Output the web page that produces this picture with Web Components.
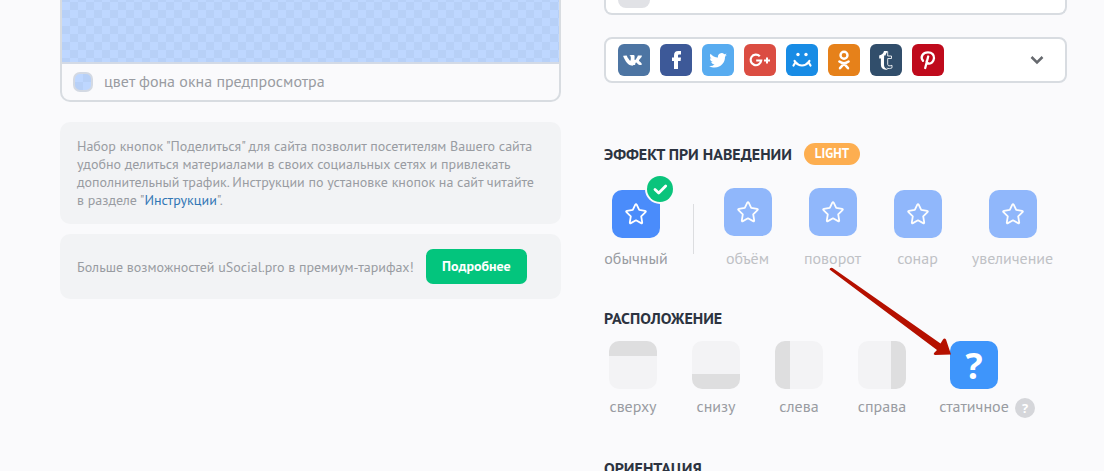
<!DOCTYPE html>
<html lang="ru">
<head>
<meta charset="utf-8">
<title>uSocial</title>
<style>
  body {
    margin: 0;
    background: #fafafc;
    color: #999ca2;
    font-family: "PT Sans", "Noto Sans", "Open Sans", sans-serif;
    font-size: 16px;
    line-height: 18px;
  }
</style>
</head>
<body>
<share-constructor></share-constructor>

<script>
const icons = {
  vk: { color: '#4d75a3', title: 'ВКонтакте', body: '<path fill="#fff" d="M15.5 21.5h1.3s.4 0 .6-.3c.2-.2.2-.6.2-.6s0-1.9.9-2.2c.8-.3 1.900 1.900 3 2.700.9.600 1.500.5 1.500.5l1.900-.1s1.500-.1.800-1.300c-.1-.1-.4-.9-2.200-2.500-1.900-1.700-1.600-1.400.6-4.400 1.400-1.800 1.900-2.900 1.800-3.300-.2-.4-1.100-.3-1.100-.3l-3.400.1s-.3 0-.5.100c-.2.100-.3.400-.3.400s-.5 1.400-1.200 2.600c-1.500 2.500-2.100 2.600-2.300 2.500-.6-.4-.4-1.500-.4-2.300 0-2.500.4-3.500-.7-3.800-.4-.1-.7-.2-1.800-.2-1.400 0-2.500 0-3.200.3-.4.200-.8.700-.6.700.3 0 .9.200 1.200.600.4.600.4 1.800.4 1.800s.2 3.300-.6 3.700c-.5.300-1.200-.3-2.700-2.900-.8-1.300-1.400-2.700-1.400-2.700s-.1-.3-.3-.4-.6-.3-.6-.3l-3.200.1s-.5 0-.7.200c-.1.200 0 .6 0 .6s2.600 6.100 5.500 9.100c2.600 2.900 5.900 2.700 5.900 2.700z" transform="translate(3.200 3.700) scale(.8)"/>' },
  facebook: { color: '#3d5998', title: 'Facebook', body: '<path fill="#fff" d="M14 25v-8h-2v-3.500h2v-2.100C14 8.500 15.500 7 18.200 7H21v3.400h-1.700c-1 0-1.300.4-1.300 1.300v1.800h3L20.600 17H18v8z"/>' },
  twitter: { color: '#58acf0', title: 'Twitter', body: '<path fill="#fff" d="M25 10.800c-.6.300-1.300.5-2 .6.700-.5 1.300-1.200 1.500-2-.7.400-1.400.7-2.200.9a3.700 3.700 0 0 0-6.300 3.300c-3-.1-5.700-1.600-7.500-3.800-1 1.700-.5 3.800 1.100 4.900-.6 0-1.100-.2-1.600-.5 0 1.800 1.200 3.300 2.900 3.700-.5.100-1.100.2-1.700.1.500 1.400 1.800 2.500 3.400 2.500A7.400 7.400 0 0 1 7.200 22c1.600 1 3.500 1.600 5.500 1.600 6.700 0 10.500-5.600 10.300-10.800.8-.5 1.400-1.200 2-2z"/>' },
  google: { color: '#db4d42', title: 'Google+', body: '<path fill="none" stroke="#fff" stroke-width="2.200" d="M15.800 12.300A5.300 5.300 0 1 0 17.200 16.500H12.200"/><path stroke="#fff" stroke-width="2" d="M20 16.500h6M23 13.500v6"/>' },
  mailru: { color: '#188ce5', title: 'Мой Мир', body: '<circle cx="12" cy="10.500" r="1.700" fill="#fff"/><circle cx="20" cy="10.500" r="1.700" fill="#fff"/><path fill="none" stroke="#fff" stroke-width="2.200" stroke-linecap="round" stroke-linejoin="round" d="M7.500 21.500l2-3.300c3.200 4.400 9.800 4.400 13 0l2 3.300M9.500 18.200L8.600 17M22.500 18.200l.9-1.200"/>' },
  ok: { color: '#e6811a', title: 'Одноклассники', body: '<circle cx="16" cy="11.200" r="3.500" fill="none" stroke="#fff" stroke-width="2.400"/><path fill="none" stroke="#fff" stroke-width="2.500" stroke-linecap="round" stroke-linejoin="round" d="M11.400 17.600c2.800 2 6.400 2 9.200 0M12 24.200l4-4.500 4 4.500"/>' },
  tumblr: { color: '#314e6b', title: 'Tumblr', body: '<path fill="#fff" d="M14 7h3.500v.9c-1.300 1-1.800 2.400-2 3.600h-1.400v2.800H14v6.700c0 2 1.300 3.700 4 4.400-4.600.9-7.100-.8-7.100-4.600v-6.200H9.200v-3C12.300 10.500 13.500 9 14 7z"/><path fill="none" stroke="#fff" stroke-opacity=".85" d="M17.700 7.500V12h3.800v2.500h-3.800v5.800c0 1.700 1.600 2 4.300 1v2.500c-1.500.9-3.800 1.100-5.300.2"/>' },
  pinterest: { color: '#bf0a1c', title: 'Pinterest', body: '<path fill="none" stroke="#fff" stroke-width="2.300" stroke-linecap="round" d="M11 16.800c-3.200-4-.1-8.400 5-8.400 4.200 0 6.300 2.600 6 5.800-.4 3.800-3 5.600-5.200 5.300-1.500-.2-2.200-1.200-2.200-2.200M16.200 12.500L13.200 24"/>' }
}

class SharePanel extends HTMLElement {

  constructor () {
    super()
    this.shadow = this.attachShadow({ mode: 'open' })
  }

  connectedCallback () {
    this.render()
  }

  render () {
    this.shadow.innerHTML =
    /*html*/`
    <style>
      :host {
        display: flex;
        align-items: center;
        box-sizing: border-box;
        padding: 15px 17px;
        border-radius: 10px;
        background: #f2f3f5;
        font-size: var(--note-size);
      }
    </style>
    <slot></slot>
    `
  }
}

customElements.define('share-panel', SharePanel);

class PreviewWindow extends HTMLElement {

  constructor () {
    super()
    this.shadow = this.attachShadow({ mode: 'open' })
  }

  connectedCallback () {
    this.render()
  }

  render () {
    this.shadow.innerHTML =
    /*html*/`
    <style>
      :host {
        display: block;
        border: 2px solid #d8dce1;
        border-top: 0;
        border-radius: 0 0 10px 10px;
      }

      .canvas {
        height: 62px;
        border-bottom: 2px solid #d3dae6;
        background: repeating-conic-gradient(#b7d0f7 0 25%, #bed7ff 0 50%) 0 2px / 16px 16px;
      }

      .background {
        display: flex;
        align-items: center;
        gap: 11px;
        height: 36px;
        padding: 0 11px;
        line-height: 16px;
      }

      #caption {
        padding-bottom: 2px;
      }

      button {
        width: 20px;
        height: 20px;
        padding: 0;
        border: 2px solid #d3d9e3;
        border-radius: 7px;
        background: repeating-conic-gradient(#b7d0f7 0 25%, #bed7ff 0 50%) 0 0 / 16px 16px;
      }
    </style>

    <div class="canvas"></div>
    <div class="background">
      <button type="button" aria-labelledby="caption"></button>
      <span id="caption"><slot></slot></span>
    </div>
    `
  }
}

customElements.define('preview-window', PreviewWindow);

class NetworkSelect extends HTMLElement {

  constructor () {
    super()
    this.shadow = this.attachShadow({ mode: 'open' })
  }

  connectedCallback () {
    this.render()
  }

  render () {
    const networks = this.getAttribute('networks').split(' ')

    this.shadow.innerHTML =
    /*html*/`
    <style>
      :host {
        display: block;
      }

      button {
        display: flex;
        align-items: center;
        gap: 10px;
        box-sizing: border-box;
        width: 100%;
        height: 46px;
        padding: 0 21px 0 12px;
        border: 2px solid #d8dce1;
        border-radius: 8px;
        background: #fff;
      }

      .chevron {
        margin-left: auto;
      }
    </style>

    <button type="button" aria-label="Социальные сети">
      ${networks.map(name => `
      <svg width="32" height="32" viewBox="0 0 32 32" role="img" aria-label="${icons[name].title}">
        <rect width="32" height="32" rx="6" fill="${icons[name].color}"/>${icons[name].body}
      </svg>`).join('')}
      <svg class="chevron" width="14" height="10" viewBox="0 0 14 10" fill="none" stroke="#66696e" stroke-width="2.500">
        <path d="M1.500 2L7 7.500 12.500 2"/>
      </svg>
    </button>
    `
  }
}

customElements.define('network-select', NetworkSelect);

class SectionTitle extends HTMLElement {

  constructor () {
    super()
    this.shadow = this.attachShadow({ mode: 'open' })
  }

  connectedCallback () {
    this.render()
  }

  render () {
    const badge = this.getAttribute('badge')

    this.shadow.innerHTML =
    /*html*/`
    <style>
      :host {
        display: flex;
        align-items: center;
        gap: 12px;
        height: 22px;
        color: #2c3340;
      }

      h2 {
        margin: 0;
        font-size: var(--title-size);
        line-height: 24px;
        white-space: nowrap;
      }

      .badge {
        padding: 0 11px;
        border-radius: 11px;
        background: #fdae50;
        color: #fff;
        font-size: 13px;
        font-weight: bold;
        line-height: 22px;
      }
    </style>

    <h2><slot></slot></h2>
    ${badge ? `<span class="badge">${badge}</span>` : ''}
    `
  }
}

customElements.define('section-title', SectionTitle);

class EffectOption extends HTMLElement {

  constructor () {
    super()
    this.shadow = this.attachShadow({ mode: 'open' })
  }

  connectedCallback () {
    this.render()
  }

  render () {
    const checked = this.hasAttribute('checked')

    this.shadow.innerHTML =
    /*html*/`
    <style>
      :host {
        display: block;
        flex: none;
        width: 85px;
        opacity: .6;
      }

      :host([checked]) {
        width: 64px;
        opacity: 1;
      }

      :host([wide]) {
        width: 105px;
      }

      button {
        display: flex;
        flex-direction: column;
        align-items: center;
        gap: 11px;
        width: 100%;
        padding: 0;
        border: 0;
        background: none;
        color: inherit;
        font: inherit;
        white-space: nowrap;
      }

      .tile {
        display: grid;
        place-items: center;
        position: relative;
        width: 48px;
        height: 48px;
        border-radius: 10px;
        background: #4a8cfb;
      }

      /* the tile floats up a little in the moving effects */
      :host([lifted]) .tile {
        margin-top: -2px;
        margin-bottom: 2px;
      }

      .mark {
        position: absolute;
        top: -16px;
        right: -15px;
      }
    </style>

    <button type="button" aria-pressed="${checked}">
      <span class="tile">
        <svg width="24" height="24" viewBox="0 0 24 24" fill="none" stroke="#fff" stroke-width="1.800" stroke-linejoin="round">
          <path d="M11.300 2.700q.7-1.200 1.400 0l2.500 5.200 5.900.9q1.300.3.400 1.300l-4.300 4.200 1 6q.1 1.300-1.100.8L12 18.300l-5.100 2.800q-1.200.5-1.100-.8l1-6-4.300-4.200q-.9-1 .4-1.300l5.900-.9z"/>
        </svg>
        ${checked ? `
        <svg class="mark" width="30" height="30" viewBox="0 0 30 30">
          <circle cx="15" cy="15" r="15" fill="#fafafc"/>
          <circle cx="15" cy="15" r="13" fill="#0ac47c"/>
          <path fill="none" stroke="#fff" stroke-width="2.800" stroke-linecap="round" stroke-linejoin="round" d="M10 15.500l3.700 3.500 7-7"/>
        </svg>` : ''}
      </span>
      <slot></slot>
    </button>
    `
  }
}

customElements.define('effect-option', EffectOption);

class PlaceOption extends HTMLElement {

  constructor () {
    super()
    this.shadow = this.attachShadow({ mode: 'open' })
  }

  connectedCallback () {
    this.render()
  }

  render () {
    const side = this.getAttribute('side')

    this.shadow.innerHTML =
    /*html*/`
    <style>
      :host {
        display: block;
        flex: none;
        width: 58px;
      }

      :host([side="static"]) {
        width: 76px;
      }

      button {
        display: flex;
        flex-direction: column;
        align-items: center;
        gap: 8px;
        width: 100%;
        padding: 0;
        border: 0;
        background: none;
        color: inherit;
        font: inherit;
        white-space: nowrap;
      }

      .tile {
        box-sizing: border-box;
        width: 48px;
        height: 48px;
        border: 0 solid #dededf;
        border-radius: 10px;
        background: #f3f3f5;
      }

      .top { border-top-width: 15px; }
      .bottom { border-bottom-width: 15px; }
      .left { border-left-width: 15px; }
      .right { border-right-width: 15px; }

      .static {
        background: #3e95fb;
        color: #fff;
        font-family: "Open Sans", "Noto Sans", sans-serif;
        font-size: 36px;
        font-weight: bold;
        line-height: 50px;
      }
    </style>

    <button type="button" aria-pressed="${side === 'static'}">
      <span class="tile ${side}">${side === 'static' ? '?' : ''}</span>
      <slot></slot>
    </button>
    `
  }
}

customElements.define('place-option', PlaceOption);

class ShareConstructor extends HTMLElement {

  constructor () {
    super()
    this.shadow = this.attachShadow({ mode: 'open' })
  }

  connectedCallback () {
    this.render()
  }

  render () {
    this.shadow.innerHTML =
    /*html*/`
    <style>
      :host {
        display: grid;
        grid-template-columns: minmax(0, 501fr) minmax(0, 463fr);
        gap: 43px;
        height: 100vh;
        padding: 0 37px 0 60px;
        overflow: hidden;
        --title-size: 16px;
        --note-size: 14px;
      }

      .preview {
        display: flex;
        flex-direction: column;
      }

      .about {
        margin-top: 20px;
      }

      .about p {
        margin: 0;
      }

      .premium {
        gap: 12px;
        margin-top: 10px;
        line-height: 16px;
      }

      a {
        color: #3277b5;
        text-decoration: none;
      }

      .more {
        flex: none;
        width: 101px;
        height: 35px;
        padding: 0 0 2px;
        border: 0;
        border-radius: 7px;
        background: #03c57d;
        color: #fff;
        font: inherit;
        font-weight: bold;
      }

      .settings {
        position: relative;
      }

      .picked {
        display: flex;
        align-items: flex-end;
        box-sizing: border-box;
        height: 15px;
        padding: 0 12px 5px;
        border: 2px solid #d8dce1;
        border-top: 0;
        border-radius: 0 0 8px 8px;
        background: #fff;
      }

      .picked span {
        width: 32px;
        height: 8px;
        border-radius: 0 0 8px 8px;
        background: #e1e2e6;
      }

      network-select {
        margin: 22px 0 60px;
      }

      .effects {
        display: flex;
        margin: 25px 0 40px;
      }

      .effects hr {
        flex: none;
        width: 1px;
        height: 50px;
        margin: 14px 11px 0 25px;
        border: 0;
        background: #dcdde0;
      }

      .places {
        display: flex;
        align-items: flex-end;
        gap: 25px;
        margin: 12px 0 42px;
      }

      .help {
        width: 20px;
        height: 20px;
        margin: 0 0 -3px -22px;
        padding: 0;
        border: 0;
        border-radius: 50%;
        background: #d5d6da;
        color: #fff;
        font: inherit;
        font-family: "Open Sans", "Noto Sans", sans-serif;
        font-size: 13px;
        font-weight: bold;
        line-height: 20px;
      }

      .pointer {
        position: absolute;
        top: 266px;
        left: 224px;
        pointer-events: none;
      }
    </style>

    <section class="preview">
      <preview-window>цвет фона окна предпросмотра</preview-window>
      <share-panel class="about">
        <p>Набор кнопок "Поделиться" для сайта позволит посетителям Вашего сайта<br>
        удобно делиться материалами в своих социальных сетях и привлекать<br>
        дополнительный трафик. Инструкции по установке кнопок на сайт читайте<br>
        в разделе "<a href="#help">Инструкции</a>".</p>
      </share-panel>
      <share-panel class="premium">
        <span>Больше возможностей uSocial.pro в премиум-тарифах!</span>
        <button class="more" type="button">Подробнее</button>
      </share-panel>
    </section>

    <section class="settings">
      <div class="picked"><span></span></div>
      <network-select networks="vk facebook twitter google mailru ok tumblr pinterest"></network-select>

      <section-title badge="LIGHT">ЭФФЕКТ ПРИ НАВЕДЕНИИ</section-title>
      <div class="effects">
        <effect-option checked>обычный</effect-option>
        <hr>
        <effect-option lifted>объём</effect-option>
        <effect-option lifted>поворот</effect-option>
        <effect-option>сонар</effect-option>
        <effect-option wide>увеличение</effect-option>
      </div>

      <section-title>РАСПОЛОЖЕНИЕ</section-title>
      <div class="places">
        <place-option side="top">сверху</place-option>
        <place-option side="bottom">снизу</place-option>
        <place-option side="left">слева</place-option>
        <place-option side="right">справа</place-option>
        <place-option side="static">статичное</place-option>
        <button class="help" type="button">?</button>
      </div>

      <section-title>ОРИЕНТАЦИЯ</section-title>

      <svg class="pointer" width="126" height="92" viewBox="0 0 126 92" fill="#b51000">
        <path d="M1.500 3.500Q2 1 4.500 2L112.500 77.500l2.500-4q1.500-2 3 0L123 88.500l-16 .5q-2-.5-1-2l3-3z"/>
      </svg>
    </section>
    `
  }
}

customElements.define('share-constructor', ShareConstructor);
</script>
</body>
</html>
